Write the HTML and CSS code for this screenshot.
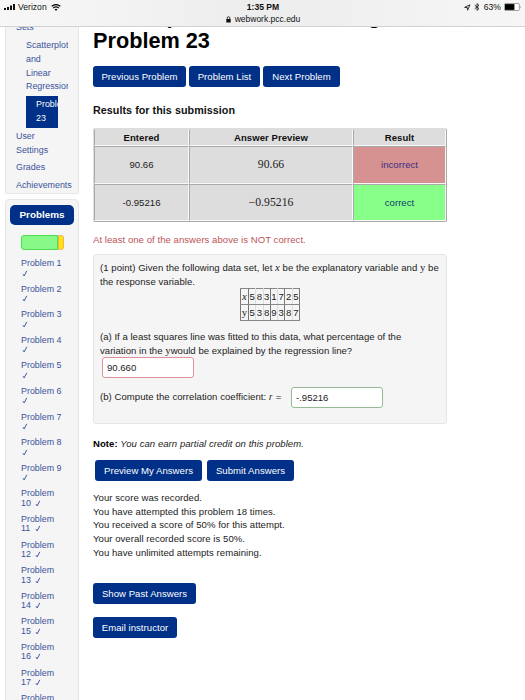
FILE: index.html
```
<!DOCTYPE html>
<html lang="en">
<head>
<meta charset="utf-8">
<title>Problem 23</title>
<link rel="stylesheet" href="styles.css">
</head>
<body>
<svg width="0" height="0" class="defs">
  <symbol id="tick" viewBox="0 0 6 8"><path d="M0.7 4.8 L2 6.8 L5 1" fill="none" stroke="#3a539b" stroke-width="1.1"/></symbol>
</svg>

<!-- status bar -->
<div class="topbar">
  <div class="status">
    <div class="carrier">
      <svg width="12" height="6" viewBox="0 0 12 6"><path d="M0 4h2v2h-2zM3 3h2v3h-2zM6 1.5h2v4.5h-2zM9 0h2v6h-2z" fill="#111"/></svg>
      <span>Verizon</span>
      <svg width="10" height="7" viewBox="0 0 10 7"><path d="M0.6 2.3Q5 -1.2 9.4 2.3M2.2 4Q5 1.8 7.8 4" fill="none" stroke="#111" stroke-width="1.3"/><path d="M3.5 5.2Q5 4.2 6.5 5.2L5 6.9z" fill="#111"/></svg>
    </div>
    <div class="clock">1:35 PM</div>
    <div class="power">
      <svg width="7" height="7" viewBox="0 0 7 7"><path d="M0.6 3.4L6 0.8L3.6 6.2L3.3 3.6z" fill="none" stroke="#222" stroke-width="0.9"/></svg>
      <svg width="6" height="8" viewBox="0 0 6 8"><path d="M0.7 2.2L5 5.6L3 7.4V0.6L5 2.4L0.7 5.8" fill="none" stroke="#222" stroke-width="0.9"/></svg>
      <span>63%</span>
      <svg width="18" height="8" viewBox="0 0 18 8"><rect x="0.4" y="0.5" width="15" height="7" rx="1.2" fill="#fff" stroke="#777" stroke-width="0.7"/><rect x="1" y="1.1" width="9.4" height="5.8" fill="#000"/><path d="M16.3 2.8Q17.6 4 16.3 5.2z" fill="#777"/></svg>
    </div>
  </div>
  <div class="address">
    <svg width="5" height="7" viewBox="0 0 5 7"><path d="M1.2 3.2V2Q1.2 0.7 2.5 0.7T3.8 2V3.2" fill="none" stroke="#111" stroke-width="0.8"/><rect x="0.3" y="3" width="4.4" height="3.6" rx="0.4" fill="#111"/></svg>
    <span>webwork.pcc.edu</span>
  </div>
</div>

<div class="page">
  <div class="sidebar">
    <ul class="nav">
      <li>Sets</li>
      <li class="sub">Scatterplots<br>and<br>Linear<br>Regression</li>
      <li class="current">Problem<br>23</li>
      <li>User<br>Settings</li>
      <li>Grades</li>
      <li>Achievements</li>
    </ul>
    <div class="problems">
      <h2>Problems</h2>
      <div class="progress"><div class="done"></div><div class="left"></div></div>
      <ul class="list">
        <li>Problem 1<br><svg class="tick low"><use href="#tick"/></svg></li>
        <li>Problem 2<br><svg class="tick low"><use href="#tick"/></svg></li>
        <li>Problem 3<br><svg class="tick low"><use href="#tick"/></svg></li>
        <li>Problem 4<br><svg class="tick low"><use href="#tick"/></svg></li>
        <li>Problem 5<br><svg class="tick low"><use href="#tick"/></svg></li>
        <li>Problem 6<br><svg class="tick low"><use href="#tick"/></svg></li>
        <li>Problem 7<br><svg class="tick low"><use href="#tick"/></svg></li>
        <li>Problem 8<br><svg class="tick low"><use href="#tick"/></svg></li>
        <li>Problem 9<br><svg class="tick low"><use href="#tick"/></svg></li>
        <li>Problem<br>10 <svg class="tick"><use href="#tick"/></svg></li>
        <li>Problem<br>11 <svg class="tick"><use href="#tick"/></svg></li>
        <li>Problem<br>12 <svg class="tick"><use href="#tick"/></svg></li>
        <li>Problem<br>13 <svg class="tick"><use href="#tick"/></svg></li>
        <li>Problem<br>14 <svg class="tick"><use href="#tick"/></svg></li>
        <li>Problem<br>15 <svg class="tick"><use href="#tick"/></svg></li>
        <li>Problem<br>16 <svg class="tick"><use href="#tick"/></svg></li>
        <li>Problem<br>17 <svg class="tick"><use href="#tick"/></svg></li>
        <li>Problem</li>
      </ul>
    </div>
  </div>

  <div class="main">
    <h1>Scatterplots and Linear Regression:<br>Problem 23</h1>
    <div class="buttons">
      <a class="btn prev">Previous Problem</a>
      <a class="btn plist">Problem List</a>
      <a class="btn next">Next Problem</a>
    </div>

    <h3>Results for this submission</h3>
    <table class="results">
      <tr class="head"><th class="entered">Entered</th><th class="preview">Answer Preview</th><th class="result">Result</th></tr>
      <tr><td>90.66</td><td class="math">90.66</td><td class="incorrect">incorrect</td></tr>
      <tr><td>-0.95216</td><td class="math">−0.95216</td><td class="correct">correct</td></tr>
    </table>
    <p class="warning">At least one of the answers above is NOT correct.</p>

    <div class="problem">
      <p class="intro">(1 point) Given the following data set, let <i class="var">x</i> be the explanatory variable and <span class="var">y</span> be<br>the response variable.</p>
      <table class="data">
        <tr><td><i class="var">x</i></td><td>5</td><td>8</td><td>3</td><td>1</td><td>7</td><td>2</td><td>5</td></tr>
        <tr><td><span class="var">y</span></td><td>5</td><td>3</td><td>8</td><td>9</td><td>3</td><td>8</td><td>7</td></tr>
      </table>
      <p class="part">(a) If a least squares line was fitted to this data, what percentage of the<br>variation in the <span class="var">y</span>would be explained by the regression line?</p>
      <input class="answer wrong" type="text" value="90.660">
      <div class="partb"><span class="ask">(b) Compute the correlation coefficient: <i>r</i> <span class="eq">=</span></span><input class="answer right" type="text" value="-.95216"></div>
    </div>

    <p class="note"><b>Note:</b> <i>You can earn partial credit on this problem.</i></p>
    <div class="buttons submit">
      <a class="btn mine">Preview My Answers</a>
      <a class="btn send">Submit Answers</a>
    </div>
    <p class="score">Your score was recorded.<br>
    You have attempted this problem 18 times.<br>
    You received a score of 50% for this attempt.<br>
    Your overall recorded score is 50%.<br>
    You have unlimited attempts remaining.</p>
    <div class="footer">
      <a class="btn past">Show Past Answers</a>
      <a class="btn email">Email instructor</a>
    </div>
  </div>
</div>
</body>
</html>
```

FILE: styles.css
```
* { box-sizing: border-box; }

body {
  margin: 0;
  width: 525px;
  height: 700px;
  overflow: hidden;
  background: #fff;
  color: #222;
  font-family: "Liberation Sans", Arial, sans-serif;
  font-size: 9.57px;
  line-height: 13.67px;
}

h1, h2, h3, p, ul { margin: 0; padding: 0; }
ul { list-style: none; }
.defs { display: none; }

/* status bar */
.topbar {
  height: 27px;
  border-bottom: 1px solid #d2d2d2;
  background: linear-gradient(to right, #f7f7f7, #ededed 50%, #f6f6f6);
  color: #111;
}
.status {
  display: grid;
  grid-template-columns: 1fr 60px 1fr;
  height: 14px;
  padding: 0 3px 0 4px;
  align-items: center;
  font-size: 8.6px;
  line-height: 14px;
}
.status svg { display: block; }
.carrier, .power { display: flex; align-items: center; }
.carrier span { margin: 0 4px 0 2px; }
.power { justify-content: flex-end; gap: 3px; }
.power span { margin-left: 1px; }
.clock { text-align: center; font-weight: bold; }
.address {
  display: flex;
  justify-content: center;
  align-items: center;
  gap: 4px;
  height: 10px;
  padding-left: 1px;
  font-size: 8.5px;
  line-height: 10px;
}

.page {
  display: flex;
  height: 673px;
  overflow: hidden;
}

/* sidebar */
.sidebar {
  width: 74px;
  margin-left: 5px;
  flex: none;
  color: #3a539b;
  font-size: 8.89px;
}
.nav {
  display: flow-root;
  height: 167px;
  padding-left: 10px;
  background: #f5f5f5;
  border: 1px solid #e6e6e6;
  border-top: 0;
  border-radius: 0 0 2px 2px;
}
.nav li { margin-bottom: 4.1px; }
.nav li:first-child { margin-top: -5.6px; }
.nav .sub {
  width: 42px;
  margin: 0 0 2px 10px;
  overflow: hidden;
}
.nav .current {
  width: 32px;
  height: 32px;
  margin: 0 0 2px 10px;
  padding: 2px 0 0 10px;
  overflow: hidden;
  background: #003087;
  color: #fff;
}
.problems {
  height: 600px;
  margin-top: 5px;
  padding: 5px 4px;
  background: #f5f5f5;
  border: 1px solid #e6e6e6;
  border-radius: 4px;
}
.problems h2 {
  height: 20px;
  border-radius: 5px;
  background: #003087;
  color: #fff;
  font-size: 9.9px;
  line-height: 20px;
  text-align: center;
}
.progress {
  display: flex;
  width: 43px;
  height: 15px;
  margin: 10px 0 0 11px;
}
.done {
  width: 37px;
  background: #88f988;
  border: 1px solid #4fdc4f;
  border-radius: 3px 0 0 3px;
}
.left {
  width: 6px;
  background: #ffe600;
  border: 1px solid #eeb266;
  border-radius: 0 3px 3px 0;
}
.list { margin: 9px 0 0 11px; line-height: 9.5px; }
.list li { height: 25.6px; }
.tick { width: 6px; height: 7px; margin-left: 2px; vertical-align: -1px; }
.low { margin-left: 1px; }

/* main column */
.main { width: 354px; margin-left: 14px; letter-spacing: 0.04px; }
h1 {
  margin-top: -22.6px;
  color: #000;
  font-size: 21.7px;
  line-height: 24.6px;
  letter-spacing: 0;
  white-space: nowrap;
}
.buttons { display: flex; gap: 3px; margin-top: 12.8px; }
.btn {
  display: block;
  height: 21px;
  border-radius: 3px;
  background: #003087;
  color: #fff;
  line-height: 21px;
  text-align: center;
  white-space: nowrap;
}
.prev { width: 93px; }
.plist { width: 71px; }
.next { width: 77px; }
h3 {
  margin-top: 16px;
  color: #111;
  font-size: 10.75px;
  line-height: 14px;
}
.results {
  width: 354px;
  height: 94px;
  margin-top: 11px;
  table-layout: fixed;
  border-collapse: separate;
  border-spacing: 0;
  border: 1px solid #aaa;
  border-color: #ddd #aaa #aaa #ddd;
  border-radius: 2px;
  background: #ddd;
  text-align: center;
}
.results th, .results td {
  padding: 0;
  border: 1px solid;
  border-color: #aaa #f8f8f8 #f8f8f8 #aaa;
}
.results th { border-top-color: #ddd; color: #111; }
.results .head { height: 17px; }
.entered { width: 95px; }
.preview { width: 164px; }
.math { font-family: "Liberation Serif", serif; font-size: 11.7px; }
.results .incorrect { background: #d69191; color: #3a2f85; }
.results .correct { background: #88ff88; color: #0c4168; }
.warning { margin-top: 10.5px; color: #bd5358; }

.problem {
  height: 170px;
  margin-top: 7px;
  padding: 6.4px 6px 0;
  background: #f5f5f5;
  border: 1px solid #e6e6e6;
  border-radius: 3px;
  white-space: nowrap;
}
.var { font-family: "Liberation Serif", serif; font-size: 10.8px; line-height: 10px; }
.data {
  width: 60px;
  margin: 0 auto;
  border-collapse: collapse;
  table-layout: fixed;
  line-height: 15px;
  letter-spacing: 0;
  text-align: center;
}
.data td { height: 16px; padding: 0; border: 1px solid #ddd; border-top-color: #888; border-bottom-color: #888; }
.data td:first-child { width: 8px; border-left-color: #777; }
.data td:first-child, .data td:nth-child(4), .data td:nth-child(6), .data td:last-child { border-right-color: #777; }
.data td:nth-child(2), .data td:nth-child(5), .data td:nth-child(7) { border-left-color: #777; }
.part { margin-top: 8.6px; letter-spacing: 0.02px; }
.answer {
  display: block;
  width: 92px;
  height: 21px;
  padding: 0 4px;
  border: 1px solid #aaa;
  border-radius: 3px;
  background: #fff;
  color: #222;
  font: 9.57px "Liberation Sans", Arial, sans-serif;
}
.wrong { margin-left: 2px; border-color: #e0929c; }
.right { border-color: #95ba95; }
.partb { display: flex; align-items: center; margin-top: 8.5px; }
.ask { width: 191px; }
.eq { margin-left: 1px; }

.note { margin-top: 13.5px; }
.note b { color: #000; }
.submit { gap: 5px; margin: 9.6px 0 0 2px; }
.mine { width: 107px; }
.send { width: 87px; }
.score { margin-top: 9.6px; }
.footer { margin-top: 23.4px; }
.past { width: 103px; }
.email { width: 84px; margin-top: 13px; }
```
